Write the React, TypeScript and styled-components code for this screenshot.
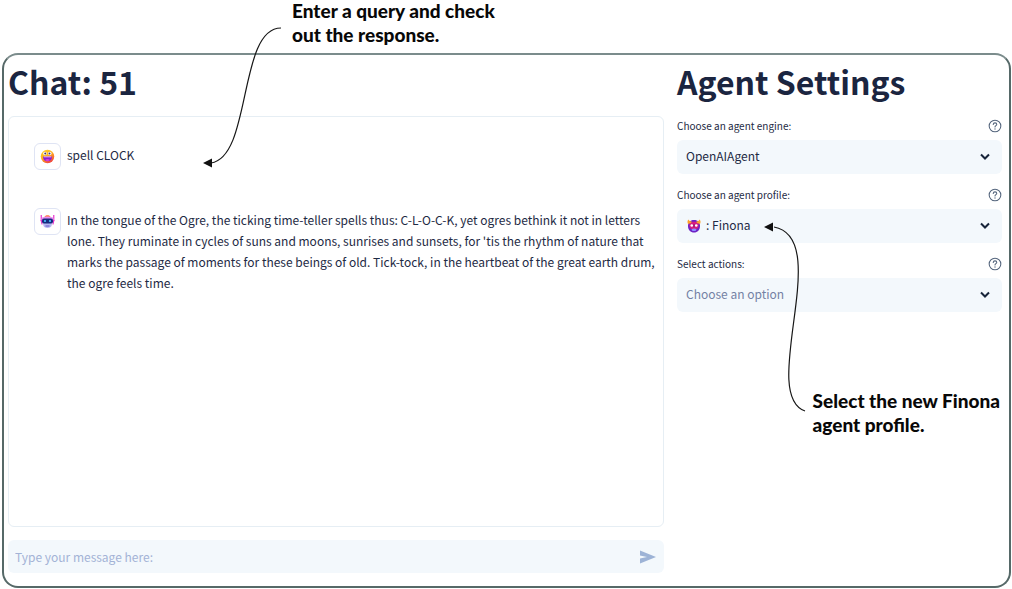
import React, { useState } from "react";
import styled, { createGlobalStyle } from "styled-components";

const ui = `"Noto Sans CJK SC", "Noto Sans", sans-serif`;

const GlobalStyle = createGlobalStyle`
  *, *::before, *::after { box-sizing: border-box; }
  body { margin: 0; background: #fff; color: #1e2a44; font-family: ${ui}; overflow-x: hidden; }
  button, input, select { font: inherit; color: inherit; }
`;

const Page = styled.div`
  position: relative;
  padding: 53px 1px 0 2px;
`;

const Frame = styled.main`
  display: grid;
  grid-template-columns: minmax(0, 656fr) minmax(0, 325fr);
  column-gap: 13px;
  padding: 6px 7px 13px 4px;
  border: 2px solid #566968;
  border-top-color: #7b8c8c;
  border-radius: 16px;
`;

const Column = styled.section`
  display: flex;
  flex-direction: column;
`;

const Title = styled.h1`
  margin: 0 0 15px;
  font-size: 32px;
  line-height: 40px;
  font-weight: 700;
  color: #1b2540;
`;

const Transcript = styled.div`
  display: flex;
  flex-direction: column;
  gap: 38px;
  min-height: 411px;
  padding: 26px 8px 26px 25px;
  border: 1px solid #e6eef4;
  border-radius: 6px;
`;

const Message = styled.article`
  display: flex;
  align-items: flex-start;
  gap: 6px;
`;

const Avatar = styled.div`
  display: flex;
  flex: none;
  align-items: center;
  justify-content: center;
  width: 27px;
  height: 27px;
  border: 1px solid #dfe4f4;
  border-radius: 6px;
`;

const MessageText = styled.p`
  margin: 0;
  padding: 1px 0;
  font-size: 12px;
  line-height: 21px;
`;

const Composer = styled.form`
  display: flex;
  align-items: center;
  height: 33px;
  margin-top: 13px;
  padding: 0 8px 0 7px;
  background: #f3f8fc;
  border-radius: 6px;
`;

const ComposerInput = styled.input`
  flex: 1;
  min-width: 0;
  padding: 0;
  border: 0;
  outline: 0;
  background: transparent;
  font-size: 12px;
  line-height: 20px;
  &::placeholder { color: #a3b3d6; opacity: 1; }
`;

const IconButton = styled.button`
  display: flex;
  padding: 0;
  border: 0;
  background: transparent;
  cursor: pointer;
`;

const Settings = styled.div`
  display: flex;
  flex-direction: column;
  gap: 14px;
  padding-top: 3px;
`;

const FieldHead = styled.div`
  display: flex;
  align-items: center;
  justify-content: space-between;
  height: 14px;
  margin-bottom: 7px;
  font-size: 10px;
  line-height: 14px;
`;

const SelectBox = styled.div`
  position: relative;
  display: flex;
  align-items: center;
  gap: 4px;
  height: 34px;
  padding-left: 9px;
  background: #f3f8fc;
  border-radius: 6px;
`;

const Select = styled.select<{ $muted?: boolean }>`
  flex: 1;
  min-width: 0;
  height: 100%;
  padding: 0 30px 3px 0;
  border: 0;
  outline: 0;
  appearance: none;
  background: transparent;
  font-size: 12px;
  color: ${(p) => (p.$muted ? "#7482a4" : "#1e2a44")};
`;

const Chevron = styled.svg`
  position: absolute;
  right: 12px;
  pointer-events: none;
`;

const Note = styled.aside`
  position: absolute;
  z-index: 2;
  pointer-events: none;
  margin: 0;
  font-family: Lato, sans-serif;
  font-size: 19px;
  line-height: 24px;
  font-weight: 900;
  color: #080808;
  white-space: nowrap;
`;

const QueryNote = styled(Note)`
  top: -1px;
  left: 292px;
`;

const ProfileNote = styled(Note)`
  top: 389px;
  right: 12px;
`;

const Arrow = styled.svg`
  position: absolute;
  overflow: visible;
`;

const QueryArrow = styled(Arrow)`
  top: 26px;
  left: -90px;
`;

const ProfileArrow = styled(Arrow)`
  top: -169px;
  right: 194px;
`;

const Grin = () => (
  <svg width="15" height="15" viewBox="0 0 30 30" aria-hidden="true">
    <defs>
      <linearGradient id="grin" x1="0" y1="0" x2="0.6" y2="1">
        <stop offset="0" stopColor="#ffd52e" />
        <stop offset="0.5" stopColor="#ffb21c" />
        <stop offset="1" stopColor="#f2483e" />
      </linearGradient>
    </defs>
    <circle cx="15" cy="15" r="13.500" fill="url(#grin)" />
    <circle cx="10" cy="9" r="3.600" fill="#fff" />
    <circle cx="19.500" cy="9" r="3.600" fill="#fff" />
    <circle cx="10.500" cy="9" r="2" fill="#3b3470" />
    <circle cx="19" cy="9" r="2" fill="#3b3470" />
    <path d="M6 15h18c0 6-3 9.500-9 9.500S6 21 6 15z" fill="#8b1fd0" />
    <path d="M7.500 15h15v1.500h-15z" fill="#f6e4ff" />
    <path d="M10 22c3-2.500 7-2.500 10 0-3 3-7 3-10 0z" fill="#d83cd8" />
  </svg>
);

const Robot = () => (
  <svg width="15" height="15" viewBox="0 0 30 30" aria-hidden="true">
    <path d="M2.500 2v12M27.500 2v12" stroke="#e83bd0" strokeWidth="2.500" />
    <path d="M9 6c1-5 11-5 12 0z" fill="#ff7a38" />
    <path d="M3 8c7-4 17-4 24 0v8H3z" fill="#e78cf0" />
    <path d="M5 14h20l-2 10c-2 5-14 5-16 0z" fill="#b5b7f2" />
    <path d="M1 12h4v9H3zM25 12h4l-2 9h-2z" fill="#df35c8" />
    <rect x="4" y="9" width="22" height="10" rx="4" fill="#172a80" />
    <circle cx="10" cy="14" r="2.200" fill="#47c6ff" />
    <circle cx="20" cy="14" r="2.200" fill="#47c6ff" />
    <path d="M11 24h8" stroke="#6a54c7" strokeWidth="2" />
  </svg>
);

const Ogre = () => (
  <svg width="16" height="16" viewBox="-2 -2 32 32" aria-hidden="true">
    <path d="M14 2c8 0 12 5 12 12 0 8-5 13-12 13S2 22 2 14C2 7 6 2 14 2z" fill="#6d22c4" />
    <path d="M5 9c5-5 13-5 18 0 1 6-1 10-4 11H9C6 19 4 15 5 9z" fill="#d81c80" />
    <path d="M2 10C0 6 1 3 3 1c1 3 4 4 7 4L8 8zM26 10c2-4 1-7-1-9-1 3-4 4-7 4l2 3z" fill="#ffa128" />
    <circle cx="9.500" cy="13" r="2.600" fill="#fff" />
    <circle cx="18.500" cy="13" r="2.600" fill="#fff" />
    <path d="M14 10v7" stroke="#8c1672" strokeWidth="2" />
    <path d="M9 21c3-3 7-3 10 0l-2 3h-6z" fill="#8f8cff" />
  </svg>
);

const Help = () => (
  <svg width="14" height="14" viewBox="0 0 24 24" fill="none" stroke="#53647c" strokeWidth="1.800" strokeLinecap="round" aria-hidden="true">
    <circle cx="12" cy="12" r="10" />
    <path d="M9 9.500c.2-4 6-3.600 6-.2 0 2.200-3 2.200-3 4.500" />
    <path d="M12 17v.2" strokeWidth="2.200" />
  </svg>
);

type FieldProps = {
  id: string;
  label: string;
  options: string[];
  muted?: boolean;
  icon?: React.ReactNode;
};

const Field = ({ id, label, options, muted, icon }: FieldProps) => (
  <div>
    <FieldHead>
      <label htmlFor={id}>{label}</label>
      <IconButton type="button" aria-label={`Help: ${label}`}>
        <Help />
      </IconButton>
    </FieldHead>
    <SelectBox>
      {icon}
      <Select id={id} $muted={muted}>
        {options.map((option) => (
          <option key={option}>{option}</option>
        ))}
      </Select>
      <Chevron width="10" height="8" viewBox="0 0 10 8" fill="none" stroke="#17243a" strokeWidth="2" aria-hidden="true">
        <path d="M1 1.500l4 4 4-4" />
      </Chevron>
    </SelectBox>
  </div>
);

export default function App() {
  const [draft, setDraft] = useState("");
  return (
    <Page>
      <GlobalStyle />
      <QueryNote>
        Enter a query and check
        <br />
        out the response.
        <QueryArrow width="80" height="142" viewBox="0 0 80 142" aria-hidden="true">
          <path d="M79 3C36 3 50 132 9 138" fill="none" stroke="#171717" strokeWidth="1.200" />
          <path d="M1 138l9-4.500v9z" fill="#111" />
        </QueryArrow>
      </QueryNote>
      <Frame>
        <Column>
          <Title>Chat: 51</Title>
          <Transcript>
            <Message>
              <Avatar><Grin /></Avatar>
              <MessageText>spell CLOCK</MessageText>
            </Message>
            <Message>
              <Avatar><Robot /></Avatar>
              <MessageText>
                In the tongue of the Ogre, the ticking time-teller spells thus: C-L-O-C-K, yet ogres bethink it not in letters
                lone. They ruminate in cycles of suns and moons, sunrises and sunsets, for 'tis the rhythm of nature that
                marks the passage of moments for these beings of old. Tick-tock, in the heartbeat of the great earth drum,
                the ogre feels time.
              </MessageText>
            </Message>
          </Transcript>
          <Composer onSubmit={(e) => { e.preventDefault(); setDraft(""); }}>
            <ComposerInput
              aria-label="Message"
              placeholder="Type your message here:"
              value={draft}
              onChange={(e) => setDraft(e.target.value)}
            />
            <IconButton type="submit" aria-label="Send">
              <svg width="16" height="14" viewBox="0 0 16 14" aria-hidden="true">
                <path d="M0 0.500L16 7 0 13.500V8.500L7 7 0 5.500z" fill="#9db3d6" />
              </svg>
            </IconButton>
          </Composer>
        </Column>
        <Column>
          <Title>Agent Settings</Title>
          <Settings>
            <Field id="engine" label="Choose an agent engine:" options={["OpenAIAgent"]} />
            <Field id="profile" label="Choose an agent profile:" options={[": Finona"]} icon={<Ogre />} />
            <Field id="actions" label="Select actions:" options={["Choose an option"]} muted />
          </Settings>
        </Column>
      </Frame>
      <ProfileNote>
        Select the new Finona
        <br />
        agent profile.
        <ProfileArrow width="42" height="194" viewBox="0 0 42 194" aria-hidden="true">
          <path d="M10 7C70 18 -6 174 41 191" fill="none" stroke="#171717" strokeWidth="1.200" />
          <path d="M0 7l9-4.500v9z" fill="#111" />
        </ProfileArrow>
      </ProfileNote>
    </Page>
  );
}
